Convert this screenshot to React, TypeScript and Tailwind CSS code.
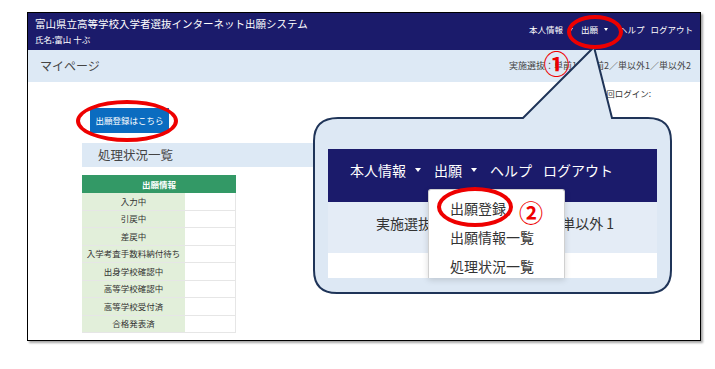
const jp = "font-['Noto_Sans_CJK_JP','Noto_Sans',sans-serif]";

const statusRows = [
  "入力中",
  "引戻中",
  "差戻中",
  "入学考査手数料納付待ち",
  "出身学校確認中",
  "高等学校確認中",
  "高等学校受付済",
  "合格発表済",
];

function Caret({ className }: { className: string }) {
  return <span className={`inline-block border-x-transparent border-t-white ${className}`} />;
}

function Callout() {
  return (
    <>
      <svg className="absolute left-0 top-0" width="715" height="369" viewBox="0 0 715 369">
        <path
          d="M338 118 L523 118 L594 47 L612 118 L648 118 Q671 118 671 141 L671 270 Q671 293 648 293 L337 293 Q314 293 314 270 L314 141 Q314 118 338 118 Z"
          fill="#dde8f4"
          stroke="#1f3458"
          strokeWidth="2"
        />
      </svg>
      {/* enlarged view of the menu */}
      <div className="absolute left-[328px] top-[149px] w-[329px] h-[129px] flex flex-col overflow-hidden">
        <div className="h-[53px] bg-[#1b1b6b] flex items-center pl-[22px] gap-[9px] text-white text-[14px] leading-none pb-[12px]">
          <span>本人情報</span>
          <Caret className="border-x-[3.5px] border-t-[4px] mr-[4px]" />
          <span>出願</span>
          <Caret className="border-x-[3.5px] border-t-[4px] mr-[4px]" />
          <span>ヘルプ</span>
          <span className="ml-[2px]">ログアウト</span>
        </div>
        <div className="h-[51px] bg-[#e4ecf6] pl-[48px] pt-[12px] text-[14px] leading-[18px] text-[#333] whitespace-nowrap">
          実施選抜：単前１／単前２／ 単以外 1
        </div>
        <div className="flex-1 bg-white" />
      </div>
      <div className="absolute left-[428px] top-[189px] w-[137px] h-[89px] bg-white border border-[#d0d0d0] border-b-0 rounded-t-[3px] shadow-[0_2px_6px_rgba(0,0,0,0.15)] flex flex-col pl-[21px] pt-[9px] gap-[11px] text-[14px] leading-[18px] text-[#333]">
        <span>出願登録</span>
        <span>出願情報一覧</span>
        <span>処理状況一覧</span>
      </div>
      {/* red markers */}
      <div className="absolute left-[567px] top-[15px] w-[56px] h-[34px] rounded-[50%] border-[4px] border-[#ee0000]" />
      <div className="absolute left-[543px] top-[49px] w-[27px] h-[27px] flex items-center justify-center text-[#ee0000] text-[26px] leading-none font-bold">
        ①
      </div>
      <div className="absolute left-[76px] top-[100px] w-[102px] h-[42px] rounded-[50%] border-[4px] border-[#ee0000]" />
      <div className="absolute left-[437px] top-[187px] w-[76px] h-[40px] rounded-[50%] border-[4px] border-[#ee0000]" />
      <div className="absolute left-[518px] top-[199px] w-[26px] h-[26px] flex items-center justify-center text-[#ee0000] text-[24px] leading-none font-bold">
        ②
      </div>
    </>
  );
}

export default function App() {
  return (
    <div className={`relative w-[715px] h-[369px] bg-white overflow-hidden ${jp}`}>
      <div className="ml-[27px] mt-[12px] w-[674px] h-[329px] border border-black shadow-[2px_2px_2px_rgba(0,0,0,0.35)] flex flex-col bg-white">
        {/* header */}
        <div className="h-[37px] bg-[#1b1b6b] flex justify-between px-[7px] text-white">
          <div className="flex flex-col pt-[4px]">
            <span className="text-[10.5px] leading-[14px]">富山県立高等学校入学者選抜インターネット出願システム</span>
            <span className="text-[8.5px] leading-[12px] mt-[2px]">氏名:富山 十ぶ</span>
          </div>
          <div className="flex items-start pt-[10px] gap-[6px] text-[8.5px] leading-[12px]">
            <span>本人情報</span>
            <Caret className="border-x-[2px] border-t-[3px] mt-[5px] mr-[2px]" />
            <span>出願</span>
            <Caret className="border-x-[2px] border-t-[3px] mt-[5px] mr-[5px]" />
            <span>ヘルプ</span>
            <span>ログアウト</span>
          </div>
        </div>
        {/* page title bar */}
        <div className="h-[32px] bg-[#dde9f5] flex items-center justify-between pl-[12px] pr-[9px] text-[#444]">
          <span className="text-[12px]">マイページ</span>
          <span className="text-[9px]">実施選抜：単前1／単前2／単以外1／単以外2</span>
        </div>
        {/* main */}
        <div className="flex-1 flex flex-col pt-[5px]">
          <div className="flex justify-end pr-[49px] h-[12px] text-[8.5px] leading-[12px] text-[#333]">
            前回ログイン:
          </div>
          <div className="pl-[54px] flex flex-col">
            <button className="ml-[8px] mt-[9px] w-[79px] h-[25px] bg-[#0b6cc0] text-white text-[8.5px]">
              出願登録はこちら
            </button>
            <div className="mt-[10px] w-[330px] h-[24px] bg-[#dde9f5] flex items-center pl-[16px] text-[12.5px] text-[#444]">
              処理状況一覧
            </div>
            <div className="mt-[8px] w-[154px] flex flex-col text-[8.5px] text-[#333]">
              <div className="h-[18px] bg-[#339966] text-white font-bold flex items-center justify-center">出願情報</div>
              {statusRows.map((r) => (
                <div key={r} className="h-[17.5px] flex border-b border-[#e6e6e6]">
                  <div className="w-[103px] bg-[#e2efda] flex items-center justify-center">{r}</div>
                  <div className="flex-1 bg-white border-r border-[#e6e6e6]" />
                </div>
              ))}
            </div>
          </div>
        </div>
      </div>
      <Callout />
    </div>
  );
}
